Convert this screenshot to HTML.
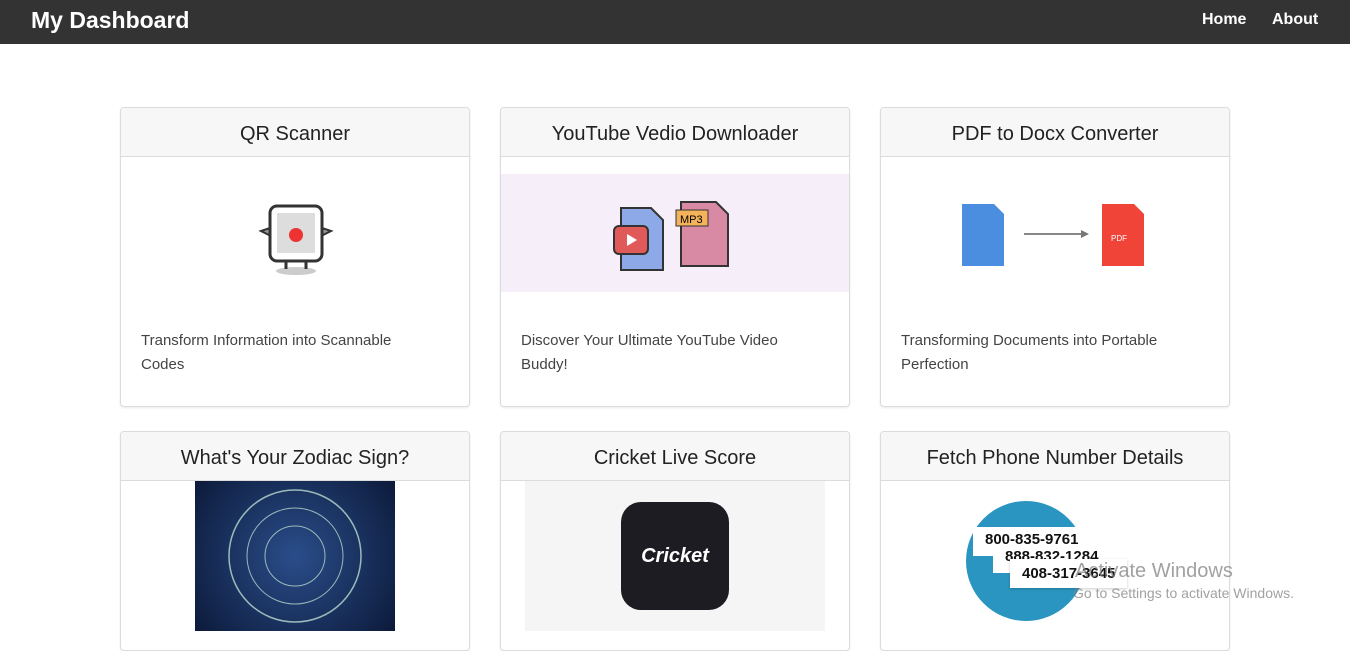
<!DOCTYPE html>
<html><head><meta charset="utf-8"><style>
*{box-sizing:border-box;margin:0;padding:0}
body{width:1350px;height:635px;overflow:hidden;background:#fff;font-family:"Segoe UI","Liberation Sans",sans-serif;color:#212529;position:relative}
.nav{position:absolute;left:0;top:0;width:1350px;height:44px;background:#333}
.nav .b{position:absolute;left:31px;top:7px;color:#fff;font-weight:bold;font-size:23px}
.nav a{position:absolute;top:11px;color:#fff;font-weight:bold;font-size:16px;text-decoration:none}
.card{position:absolute;width:350px;border:1px solid #dcdcdc;border-radius:4px;background:#fff;overflow:hidden;box-shadow:0 1px 2px rgba(0,0,0,.08)}
.hd{height:49px;background:#f7f7f7;border-bottom:1px solid #dcdcdc;text-align:center;font-size:20px;line-height:52px;color:#222}
.tx{position:absolute;left:20px;top:221px;font-size:15px;line-height:24px;color:#444;width:280px}
.ph{position:absolute;background:#fff;font:bold 15px 'Liberation Sans',sans-serif;white-space:nowrap;color:#111}
</style></head><body>
<div class="nav"><span class="b">My Dashboard</span><a style="left:1202px">Home</a><a style="left:1272px">About</a></div>

<div class="card" style="left:120px;top:107px;height:300px"><div class="hd">QR Scanner</div>
<svg style="position:absolute;left:134px;top:95px" width="82" height="75"><ellipse cx="41" cy="68" rx="20" ry="4" fill="#ccc"/><path d="M6 28 L18 24 L18 34Z M76 28 L64 24 L64 34Z" fill="#999" stroke="#333" stroke-width="2"/><rect x="15" y="3" width="52" height="55" rx="7" fill="#fff" stroke="#333" stroke-width="3"/><rect x="22" y="10" width="38" height="40" fill="#ddd"/><circle cx="41" cy="32" r="7" fill="#e33"/><path d="M31 58 v8 M51 58 v8" stroke="#333" stroke-width="3"/></svg>
<div class="tx">Transform Information into Scannable Codes</div></div>

<div class="card" style="left:500px;top:107px;height:300px"><div class="hd">YouTube Vedio Downloader</div>
<div style="position:absolute;left:0;top:66px;width:350px;height:118px;background:#f6eef8"></div>
<svg style="position:absolute;left:105px;top:88px" width="130" height="80"><path d="M15 12h30l12 12v50H15z" fill="#8ea9e8" stroke="#333" stroke-width="2"/><path d="M75 6h35l12 12v52H75z" fill="#d88aa5" stroke="#333" stroke-width="2"/><rect x="8" y="30" width="34" height="28" rx="5" fill="#e05a5a" stroke="#333" stroke-width="2"/><path d="M21 38l10 6-10 6z" fill="#fff"/><rect x="70" y="14" width="32" height="16" fill="#f4b25a" stroke="#333"/><text x="74" y="27" font-size="11" font-family="Liberation Sans">MP3</text></svg>
<div class="tx">Discover Your Ultimate YouTube Video Buddy!</div></div>

<div class="card" style="left:880px;top:107px;height:300px"><div class="hd">PDF to Docx Converter</div>
<svg style="position:absolute;left:78px;top:94px" width="195" height="70"><path d="M3 2h32l10 10v52H3z" fill="#4b8ee0"/><path d="M143 2h32l10 10v52h-42z" fill="#f04438"/><path d="M65 32h62" stroke="#888" stroke-width="2"/><path d="M122 28l8 4-8 4z" fill="#777"/><text x="152" y="39" font-size="8" fill="#fff" font-family="Liberation Sans">PDF</text></svg>
<div class="tx">Transforming Documents into Portable Perfection</div></div>

<div class="card" style="left:120px;top:431px;height:220px"><div class="hd">What's Your Zodiac Sign?</div>
<div style="position:absolute;left:74px;top:49px;width:200px;height:150px;background:radial-gradient(circle,#2a4d8a,#0c1a3a)"><svg width="200" height="150"><circle cx="100" cy="75" r="66" fill="none" stroke="#9bb" stroke-width="1.5"/><circle cx="100" cy="75" r="48" fill="none" stroke="#9bb"/><circle cx="100" cy="75" r="30" fill="none" stroke="#9bb"/></svg></div></div>

<div class="card" style="left:500px;top:431px;height:220px"><div class="hd">Cricket Live Score</div>
<div style="position:absolute;left:24px;top:49px;width:300px;height:150px;background:#f5f5f5"></div>
<div style="position:absolute;left:120px;top:70px;width:108px;height:108px;border-radius:20px;background:#1d1c22;color:#fff;font:italic bold 20px 'Liberation Sans',sans-serif;text-align:center;line-height:108px">Cricket</div></div>

<div class="card" style="left:880px;top:431px;height:220px"><div class="hd">Fetch Phone Number Details</div>
<div style="position:absolute;left:85px;top:69px;width:120px;height:120px;border-radius:50%;background:#2a95c0"></div>
<div class="ph" style="left:92px;top:95px;padding:4px 12px 8px">800-835-9761</div>
<div class="ph" style="left:112px;top:112px;padding:4px 12px 8px">888-832-1284</div>
<div class="ph" style="left:129px;top:127px;padding:6px 12px;box-shadow:0 1px 3px rgba(0,0,0,.2)">408-317-3645</div></div>

<div style="position:absolute;left:1075px;top:560px;font-size:20px;color:rgba(130,130,130,.75)">Activate Windows</div>
<div style="position:absolute;left:1073px;top:585px;font-size:14px;color:rgba(130,130,130,.75)">Go to Settings to activate Windows.</div>
</body></html>
